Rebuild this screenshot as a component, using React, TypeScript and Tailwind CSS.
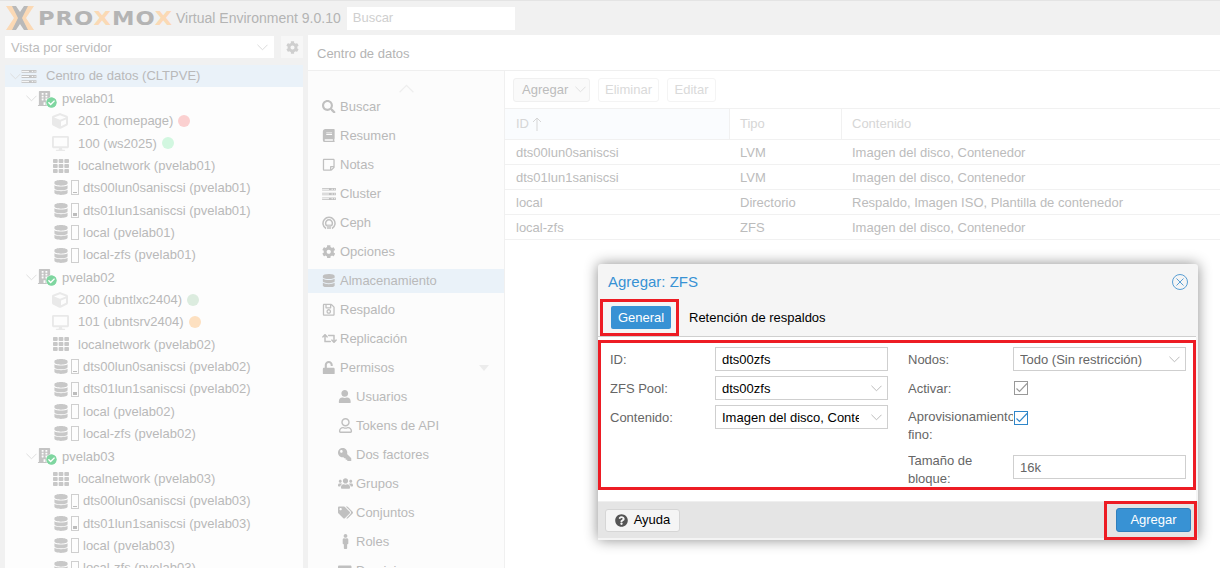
import type { ReactNode } from "react";
import {
  FaBook,
  FaBuilding,
  FaCheckCircle,
  FaCog,
  FaCube,
  FaDatabase,
  FaDesktop,
  FaKey,
  FaMale,
  FaQuestionCircle,
  FaRegIdCard,
  FaRegSave,
  FaRegStickyNote,
  FaRegUser,
  FaRetweet,
  FaSearch,
  FaTags,
  FaTh,
  FaUnlock,
  FaUser,
  FaUsers,
} from "react-icons/fa";

const Chevron = ({ className = "" }: { className?: string }) => (
  <svg viewBox="0 0 12 7" className={`w-[11px] h-[7px] shrink-0 ${className}`} fill="none" stroke="currentColor" strokeWidth="1">
    <path d="M0.5 0.5 L6 6 L11.5 0.5" />
  </svg>
);

// stacked drive bays, like the old font-awesome server glyph
const ServerBars = ({ className = "" }: { className?: string }) => (
  <svg viewBox="0 0 16 14" className={className} fill="none" stroke="currentColor">
    <path d="M0 1.5 H16 M0 7 H16 M0 12.5 H16" strokeWidth="3" />
    <path d="M11 1.5 H12.5 M14 1.5 H15 M11 7 H12.5 M14 7 H15 M11 12.5 H12.5 M14 12.5 H15 M0 1.5 H8 M0 7 H8 M0 12.5 H8" stroke="#fff" strokeWidth="1" />
  </svg>
);

const Logo = () => (
  <div className="flex items-center h-[35px] ml-[6px] shrink-0">
    <svg viewBox="0 0 28 26" className="w-[28px] h-[26px]">
      <path d="M0 1 H8 L16 13 L8 25 H0 L8 13 Z M28 1 H20 L12 13 L20 25 H28 L20 13 Z" fill="#fbd9b5" />
      <path d="M6 1 H10 L14 7 L18 1 H22 L16 13 L22 25 H18 L14 19 L10 25 H6 L12 13 Z" fill="#b9b9b9" />
    </svg>
    <span className="ml-[4px] w-[136px] whitespace-nowrap inline-block origin-left scale-x-[1.13] text-[20px] leading-none font-bold tracking-[0.9px] text-[#b4b4b4] [font-family:'DejaVu_Sans',sans-serif]">
      PRO<span className="text-[#fbd9b5]">X</span>MO<span className="text-[#fbd9b5]">X</span>
    </span>
  </div>
);

const Gauge = ({ fill }: { fill: number }) => (
  <span className="w-[8px] h-[15px] border border-[#cfcfcf] flex flex-col justify-end shrink-0 ml-[3px] p-[1px]">
    <span className="block bg-[#bdbdbd]" style={{ height: fill }} />
  </span>
);

const NodeIcon = () => (
  <span className="relative w-[21px] h-[16px] shrink-0">
    <FaBuilding className="text-[#c4c4c4] text-[15px]" />
    <FaCheckCircle className="absolute left-[9px] bottom-[-1px] text-[11px] text-[#7fd6a0] bg-white rounded-full" />
  </span>
);

const Row = ({ pad, className = "", children }: { pad: number; className?: string; children: ReactNode }) => (
  <div className={`flex items-center h-[22.36px] whitespace-nowrap ${className}`} style={{ paddingLeft: pad }}>
    {children}
  </div>
);

const NodeRow = ({ name }: { name: string }) => (
  <Row pad={21}>
    <Chevron className="text-[#dcdcdc]" />
    <NodeIcon />
    <span className="ml-[4px]">{name}</span>
  </Row>
);

const GuestRow = ({ label, kind, dot }: { label: string; kind: "ct" | "vm"; dot: string }) => (
  <Row pad={47}>
    <span className="w-[26px] shrink-0 text-[#e9e9e9] text-[16px]">{kind === "ct" ? <FaCube /> : <FaDesktop className="text-[17px]" />}</span>
    <span>{label}</span>
    <span className={`w-[12px] h-[12px] rounded-full ml-[5px] ${dot}`} />
  </Row>
);

const NetRow = ({ label }: { label: string }) => (
  <Row pad={48}>
    <span className="w-[25px] shrink-0 text-[#c8c8c8] text-[16px]"><FaTh /></span>
    <span>{label}</span>
  </Row>
);

const StoreRow = ({ label, fill }: { label: string; fill: number }) => (
  <Row pad={49}>
    <FaDatabase className="text-[#c8c8c8] text-[15px] shrink-0 w-[14px]" />
    <Gauge fill={fill} />
    <span className="ml-[4px]">{label}</span>
  </Row>
);

const storages = (node: string) => (
  <>
    <StoreRow label={`dts00lun0saniscsi (${node})`} fill={1} />
    <StoreRow label={`dts01lun1saniscsi (${node})`} fill={3} />
    <StoreRow label={`local (${node})`} fill={0} />
    <StoreRow label={`local-zfs (${node})`} fill={0} />
  </>
);

const CephIcon = () => (
  <svg viewBox="0 0 14 14" className="w-[14px] h-[14px]" fill="none" stroke="currentColor" strokeWidth="1.5">
    <path d="M4 12.5 A6 6 0 1 1 10 12.5" />
    <path d="M5 10 A3.4 3.4 0 1 1 9 10" />
    <path d="M6 13 V8.5 M8 13 V8.5" />
  </svg>
);

const menu: { label: string; icon: ReactNode; sub?: boolean; active?: boolean; caret?: boolean }[] = [
  { label: "Buscar", icon: <FaSearch /> },
  { label: "Resumen", icon: <FaBook /> },
  { label: "Notas", icon: <FaRegStickyNote /> },
  { label: "Cluster", icon: <ServerBars className="w-[14px] h-[12px]" /> },
  { label: "Ceph", icon: <CephIcon /> },
  { label: "Opciones", icon: <FaCog /> },
  { label: "Almacenamiento", icon: <FaDatabase />, active: true },
  { label: "Respaldo", icon: <FaRegSave /> },
  { label: "Replicación", icon: <FaRetweet className="text-[15px]" /> },
  { label: "Permisos", icon: <FaUnlock />, caret: true },
  { label: "Usuarios", icon: <FaUser />, sub: true },
  { label: "Tokens de API", icon: <FaRegUser className="text-[15px]" />, sub: true },
  { label: "Dos factores", icon: <FaKey className="-scale-x-100" />, sub: true },
  { label: "Grupos", icon: <FaUsers className="text-[15px]" />, sub: true },
  { label: "Conjuntos", icon: <FaTags className="text-[15px]" />, sub: true },
  { label: "Roles", icon: <FaMale className="text-[15px]" />, sub: true },
  { label: "Dominios", icon: <FaRegIdCard />, sub: true },
];

const rows = [
  ["dts00lun0saniscsi", "LVM", "Imagen del disco, Contenedor"],
  ["dts01lun1saniscsi", "LVM", "Imagen del disco, Contenedor"],
  ["local", "Directorio", "Respaldo, Imagen ISO, Plantilla de contenedor"],
  ["local-zfs", "ZFS", "Imagen del disco, Contenedor"],
];

const fieldBox = "h-[24px] w-[173px] border border-[#cfcfcf] bg-white flex items-center pl-[6px] pt-[1px] shrink-0 overflow-hidden whitespace-nowrap";

const Field = ({ label, children, className = "", labelClass = "pt-[1px]" }: { label: string; children: ReactNode; className?: string; labelClass?: string }) => (
  <div className={`flex items-center ${className}`}>
    <div className={`w-[105px] shrink-0 overflow-hidden text-[#666] leading-[18px] ${labelClass}`}>{label}</div>
    {children}
  </div>
);

const Select = ({ value, muted }: { value: string; muted?: boolean }) => (
  <div className={`${fieldBox} justify-between pr-[5px] ${muted ? "text-[#666]" : "text-black"}`}>
    <span className="overflow-hidden w-[137px]">{value}</span>
    <Chevron className="text-[#b5b5b5]" />
  </div>
);

const Check = ({ on, className = "" }: { on?: boolean; className?: string }) => (
  <svg viewBox="0 0 14 14" className={`w-[14px] h-[14px] ml-[1px] shrink-0 ${on ? "text-[#2f86c9]" : "text-[#999]"} ${className}`} fill="none" stroke="currentColor">
    <rect x="0.5" y="0.5" width="13" height="13" strokeWidth="1" />
    <path d="M2.5 7.5 L5.5 10.5 L13 2.5" strokeWidth="1.1" />
  </svg>
);

export default function App() {
  return (
    <div className="relative w-[1220px] h-[568px] overflow-hidden bg-[#f1f1f1] text-[13px] text-[#b9b9b9] [font-family:'Liberation_Sans',Arial,sans-serif]">
      {/* header */}
      <div className="flex items-center h-[35px] border-t border-[#e4e4e4]">
        <Logo />
        <span className="ml-[2px] text-[14px] text-[#b4b4b4] whitespace-nowrap">Virtual Environment 9.0.10</span>
        <div className="ml-[6px] w-[168px] h-[23px] bg-white flex items-center pl-[6px] text-[#cfcfcf]">Buscar</div>
      </div>

      <div className="flex h-[533px]">
        {/* left */}
        <div className="w-[303px] ml-[5px] shrink-0">
          <div className="flex gap-[7px] pt-[1px] mb-[7px]">
            <div className="w-[269px] h-[22px] bg-white flex items-center justify-between pl-[6px] pr-[6px] pt-[1px] text-[#bcbcbc]">
              <span>Vista por servidor</span>
              <Chevron className="text-[#d8d8d8]" />
            </div>
            <div className="w-[22px] h-[22px] bg-[#f7f7f7] flex items-center justify-center text-[#cfcfcf] text-[13px]"><FaCog /></div>
          </div>
          <div className="w-[298px] bg-[#fdfdfd] h-[520px] overflow-hidden">
            <Row pad={5} className="bg-[#eaf2f9]">
              <Chevron className="text-[#dcdcdc]" />
              <ServerBars className="text-[#c4c4c4] w-[16px] h-[13px]" />
              <span className="ml-[9px]">Centro de datos (CLTPVE)</span>
            </Row>
            <NodeRow name="pvelab01" />
            <GuestRow label="201 (homepage)" kind="ct" dot="bg-[#fbd0d0]" />
            <GuestRow label="100 (ws2025)" kind="vm" dot="bg-[#d2f7e0]" />
            <NetRow label="localnetwork (pvelab01)" />
            {storages("pvelab01")}
            <NodeRow name="pvelab02" />
            <GuestRow label="200 (ubntlxc2404)" kind="ct" dot="bg-[#dcecdf]" />
            <GuestRow label="101 (ubntsrv2404)" kind="vm" dot="bg-[#fde0c0]" />
            <NetRow label="localnetwork (pvelab02)" />
            {storages("pvelab02")}
            <NodeRow name="pvelab03" />
            <NetRow label="localnetwork (pvelab03)" />
            {storages("pvelab03")}
          </div>
        </div>

        {/* right */}
        <div className="flex-1 min-w-0 bg-white">
          <div className="h-[36px] flex items-center pl-[9px] pt-[2px] border-b border-[#efefef] text-[#b4b4b4]">Centro de datos</div>
          <div className="flex h-[497px]">
            <div className="w-[197px] shrink-0 bg-[#fcfcfc] border-r border-[#f0f0f0] overflow-hidden">
              <div className="h-[23.5px] flex justify-center items-end pb-[2px]">
                <Chevron className="rotate-180 text-[#eeeeee] w-[15px] h-[9px]" />
              </div>
              {menu.map((m, i) => (
                <div key={i} className={`flex items-center h-[24px] mb-[5px] relative ${m.active ? "bg-[#eaf2f9]" : ""} ${m.sub ? "pl-[26px]" : "pl-[10px]"}`}>
                  <span className="w-[22px] shrink-0 flex justify-center text-[#c0c0c0] text-[13.5px]">{m.icon}</span>
                  <span>{m.label}</span>
                  {m.caret && <span className="absolute right-[15px] top-[9px] w-0 h-0 border-x-[5px] border-x-transparent border-t-[6px] border-t-[#ececec]" />}
                </div>
              ))}
            </div>
            <div className="flex-1 min-w-0">
              <div className="h-[37px] flex items-center pl-[8px] gap-[8px]">
                <div className="h-[24px] w-[77px] rounded-[3px] border border-[#f0f0f0] bg-[#fafafa] flex items-center pl-[8px] text-[#bcbcbc] gap-[7px]">
                  Agregar
                  <Chevron className="text-[#dedede]" />
                </div>
                <div className="h-[24px] w-[61px] rounded-[3px] border border-[#f4f4f4] flex items-center justify-center text-[#dadada]">Eliminar</div>
                <div className="h-[24px] w-[49px] rounded-[3px] border border-[#f4f4f4] flex items-center justify-center text-[#dadada]">Editar</div>
              </div>
              <div className="grid grid-cols-[225px_112px_1fr] h-[32px] border-y border-[#f1f1f1] text-[#d6d6d6] items-stretch">
                <div className="bg-[#fafcfe] border-r border-[#f1f1f1] flex items-center pl-[11px] gap-[3px]">
                  ID
                  <svg viewBox="0 0 10 14" className="w-[10px] h-[14px]" fill="none" stroke="currentColor" strokeWidth="1">
                    <path d="M5 14 V1 M1 5 L5 1 L9 5" />
                  </svg>
                </div>
                <div className="border-r border-[#f1f1f1] flex items-center pl-[10px]">Tipo</div>
                <div className="flex items-center pl-[10px]">Contenido</div>
              </div>
              {rows.map((r) => (
                <div key={r[0]} className="grid grid-cols-[225px_112px_1fr] h-[25px] pt-[1px] border-b border-[#f1f1f1] items-center text-[#bcbcbc]">
                  <div className="pl-[11px]">{r[0]}</div>
                  <div className="pl-[10px]">{r[1]}</div>
                  <div className="pl-[10px]">{r[2]}</div>
                </div>
              ))}
            </div>
          </div>
        </div>
      </div>

      {/* modal */}
      <div className="absolute left-[598px] top-[264px] w-[600px] h-[276px] bg-[#f5f5f5] rounded-[3px] shadow-[0_0_14px_rgba(0,0,0,0.45)] flex flex-col text-black">
        <div className="h-[35px] flex items-center justify-between pl-[10px] pr-[10px] pt-[1px] text-[15px] text-[#3892d4]">
          <span>Agregar: ZFS</span>
          <svg viewBox="0 0 16 16" className="w-[16px] h-[16px]" fill="none" stroke="#5a9fd4" strokeWidth="1">
            <circle cx="8" cy="8" r="7.5" />
            <path d="M4.5 4.5 L11.5 11.5 M11.5 4.5 L4.5 11.5" />
          </svg>
        </div>
        <div className="h-[38px] flex items-center pl-[13px] border-b border-[#cfcfcf] mr-[2px]">
          <div className="w-[60px] h-[23px] rounded-[2px] bg-[#3892d4] text-white flex items-center justify-center">General</div>
          <div className="ml-[18px]">Retención de respaldos</div>
        </div>
        <div className="h-[164px] bg-white mr-[2px] pt-[10px] pl-[12px] flex gap-[20px]">
          <div className="flex flex-col gap-[5px] w-[278px]">
            <Field label="ID:" className="h-[24px]"><div className={fieldBox}>dts00zfs</div></Field>
            <Field label="ZFS Pool:" className="h-[24px]"><Select value="dts00zfs" /></Field>
            <Field label="Contenido:" className="h-[24px]"><Select value="Imagen del disco, Contenedor" /></Field>
          </div>
          <div className="flex flex-col w-[278px]">
            <Field label="Nodos:" className="h-[24px] mb-[5px]"><Select value="Todo (Sin restricción)" muted /></Field>
            <Field label="Activar:" className="h-[24px] mb-[5px]"><Check /></Field>
            <Field label="Aprovisionamiento fino:" className="!items-start pt-[3px] mb-[5px]" labelClass=""><Check on className="mt-[3px]" /></Field>
            <Field label="Tamaño de bloque:" className="h-[36px]" labelClass="pt-[5px]"><div className={`${fieldBox} text-[#666]`}>16k</div></Field>
          </div>
        </div>
        <div className="flex-1 bg-[#e5e5e5] border-t border-[#efefef] border-b-2 border-b-[#f4f4f4] flex items-center justify-between pl-[7px] pr-[7px]">
          <div className="w-[75px] h-[23px] rounded-[3px] border border-[#d6d6d6] bg-[#f5f5f5] flex items-center justify-center gap-[6px]">
            <FaQuestionCircle className="text-[#555] text-[13px]" />
            Ayuda
          </div>
          <div className="w-[75px] h-[24px] rounded-[3px] border border-[#2f7fbd] bg-[#3892d4] text-white flex items-center justify-center">Agregar</div>
        </div>

        {/* red highlight boxes */}
        <div className="absolute left-[2px] top-[35px] w-[79px] h-[37px] border-[3px] border-[#ed1c24] pointer-events-none" />
        <div className="absolute left-0 top-[76px] w-[598px] h-[150px] border-[3px] border-[#ed1c24] pointer-events-none" />
        <div className="absolute left-[506px] top-[237px] w-[93px] h-[39px] border-[3px] border-[#ed1c24] pointer-events-none" />
      </div>
    </div>
  );
}
